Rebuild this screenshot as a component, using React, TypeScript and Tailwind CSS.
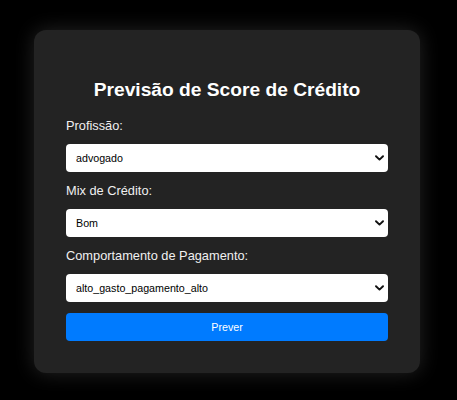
import { useState } from "react";

function Chevron() {
  return (
    <svg
      className="pointer-events-none absolute right-[4px] top-1/2 -translate-y-1/2"
      width="9"
      height="6"
      viewBox="0 0 9 6"
      fill="none"
    >
      <path d="M1 1.2 L4.5 4.6 L8 1.2" stroke="#111" strokeWidth="1.9" strokeLinecap="round" strokeLinejoin="round" />
    </svg>
  );
}

function Field({
  label,
  value,
  options,
  onChange,
}: {
  label: string;
  value: string;
  options: string[];
  onChange: (v: string) => void;
}) {
  return (
    <div>
      <label className="block text-[12.8px] leading-[15px] text-[#f0f0f0] mb-[11px]">{label}</label>
      <div className="relative mb-[11px]">
        <select
          value={value}
          onChange={(e) => onChange(e.target.value)}
          className="block w-full h-[28px] appearance-none rounded-[4px] bg-white pl-[10px] pr-6 text-[10.7px] text-black outline-none"
        >
          {options.map((o) => (
            <option key={o} value={o}>
              {o}
            </option>
          ))}
        </select>
        <Chevron />
      </div>
    </div>
  );
}

export default function App() {
  const [profissao, setProfissao] = useState("advogado");
  const [mix, setMix] = useState("Bom");
  const [comp, setComp] = useState("alto_gasto_pagamento_alto");

  return (
    <div
      className="min-h-screen w-full bg-black flex items-center justify-center pr-[3px] pt-[3px]"
      style={{ fontFamily: '"Liberation Sans", Arial, Helvetica, sans-serif' }}
    >
      <div className="w-[386px] rounded-[12px] bg-[#232323] px-8 pt-8 pb-8 shadow-[0_0_20px_rgba(255,255,255,0.14)]">
        <h2 className="mt-[17px] mb-[17px] text-center text-[19.2px] leading-[22px] font-bold text-white">
          Previsão de Score de Crédito
        </h2>
        <Field
          label="Profissão:"
          value={profissao}
          onChange={setProfissao}
          options={["advogado", "engenheiro", "médico", "professor", "arquiteto"]}
        />
        <Field label="Mix de Crédito:" value={mix} onChange={setMix} options={["Bom", "Padrão", "Ruim"]} />
        <Field
          label="Comportamento de Pagamento:"
          value={comp}
          onChange={setComp}
          options={[
            "alto_gasto_pagamento_alto",
            "alto_gasto_pagamento_medio",
            "alto_gasto_pagamento_baixo",
            "baixo_gasto_pagamento_alto",
          ]}
        />
        <button className="block w-full h-[28px] rounded-[4px] bg-[#007bff] text-[10.7px] text-white">
          Prever
        </button>
      </div>
    </div>
  );
}
